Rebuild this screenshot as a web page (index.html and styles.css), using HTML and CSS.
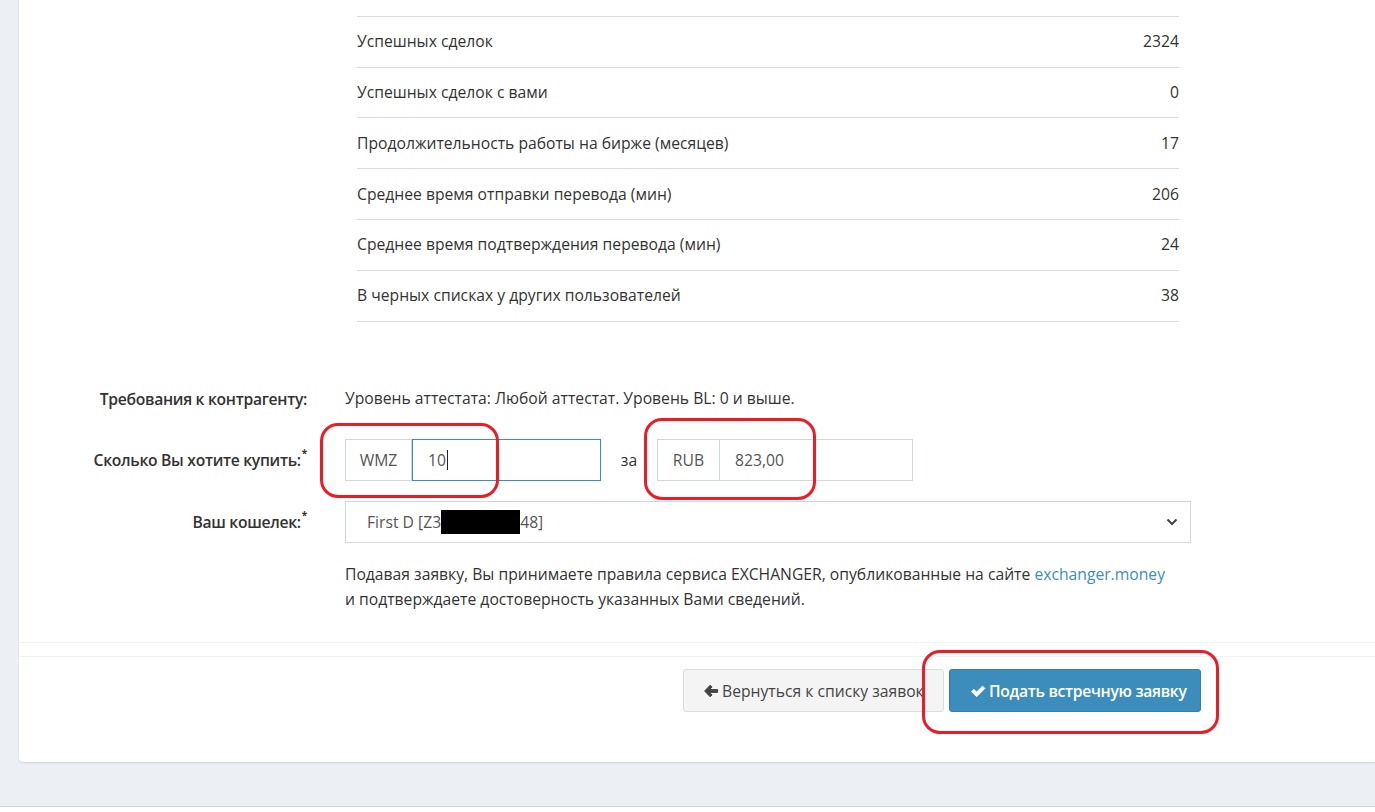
FILE: index.html
```html
<!DOCTYPE html>
<html lang="ru">
<head>
<meta charset="utf-8">
<title>Встречная заявка</title>
<link rel="stylesheet" href="styles.css">
</head>
<body>
<div class="page">
  <div class="card">
    <div class="card-body">
      <div class="stats">
        <div class="stat-row"><span>Дата регистрации на бирже</span><span></span></div>
        <div class="stat-row"><span>Успешных сделок</span><span>2324</span></div>
        <div class="stat-row"><span>Успешных сделок с вами</span><span>0</span></div>
        <div class="stat-row"><span>Продолжительность работы на бирже (месяцев)</span><span>17</span></div>
        <div class="stat-row"><span>Среднее время отправки перевода (мин)</span><span>206</span></div>
        <div class="stat-row"><span>Среднее время подтверждения перевода (мин)</span><span>24</span></div>
        <div class="stat-row"><span>В черных списках у других пользователей</span><span>38</span></div>
      </div>

      <div class="form">
        <div class="form-row">
          <div class="label">Требования к контрагенту:</div>
          <div class="value static">Уровень аттестата: Любой аттестат. Уровень BL: 0 и выше.</div>
        </div>
        <div class="form-row">
          <div class="label">Сколько Вы хотите купить:<sup>*</sup></div>
          <div class="value amounts">
            <div class="input-group">
              <span class="addon addon-wmz">WMZ</span>
              <span class="input focused">10<span class="caret"></span></span>
            </div>
            <span class="za">за</span>
            <div class="input-group">
              <span class="addon addon-rub">RUB</span>
              <span class="input">823,00</span>
            </div>
          </div>
        </div>
        <div class="form-row">
          <div class="label">Ваш кошелек:<sup>*</sup></div>
          <div class="value">
            <div class="select">
              <span class="select-text">First D [Z3<span class="redact"></span>48]</span>
              <svg class="chevron" viewBox="0 0 12 8" width="12" height="8"><polyline points="1.5,1.5 6,6 10.5,1.5" fill="none" stroke="#444" stroke-width="2"/></svg>
            </div>
          </div>
        </div>
        <div class="form-row note-row">
          <div class="label"></div>
          <p class="note">Подавая заявку, Вы принимаете правила сервиса EXCHANGER, опубликованные на сайте <a href="#">exchanger.money</a><br>и подтверждаете достоверность указанных Вами сведений.</p>
        </div>
      </div>
    </div>
    <div class="card-footer">
      <button class="btn btn-default" type="button">
        <svg class="ico" viewBox="0 0 16 16" width="16" height="16"><path d="M7.2 2.2 L1.6 8 L7.2 13.8 L9.1 11.9 L6.4 9.4 H14.6 V6.6 H6.4 L9.1 4.1 Z" fill="#444" stroke="#444" stroke-width="1" stroke-linejoin="round"/></svg>Вернуться к списку заявок
      </button>
      <button class="btn btn-primary" type="button">
        <svg class="ico" viewBox="0 0 16 16" width="16" height="16"><path d="M1.5 8.6 L3.8 6.3 L6.6 9.1 L12.6 3.1 L14.9 5.4 L6.6 13.7 Z" fill="#fff" stroke="#fff" stroke-width="0.8" stroke-linejoin="round"/></svg>Подать встречную заявку
      </button>
    </div>
  </div>
  <div class="main-footer"></div>

  <div class="mark mark-1"></div>
  <div class="mark mark-2"></div>
  <div class="mark mark-3"></div>
</div>
</body>
</html>
```

FILE: styles.css
```css
html, body {
  margin: 0;
  padding: 0;
}
body {
  background: #ecf0f5;
  font-family: "Open Sans", "Noto Sans", sans-serif;
  font-size: 15.7px;
  color: #333;
  overflow: hidden;
}
.page {
  position: relative;
  display: flow-root;
  width: 1375px;
  height: 812px;
}
.card {
  margin-left: 19px;
  margin-top: -34px;
  background: #fff;
  border-bottom-left-radius: 4px;
  box-shadow: 0 1px 2px rgba(0, 0, 0, 0.12);
}
.card-body {
  padding-bottom: 30px;
  border-bottom: 1px solid #f2f2f2;
}
.stats {
  margin-left: 338px;
  width: 822px;
}
.stat-row {
  display: flex;
  justify-content: space-between;
  align-items: center;
  height: 50.8px;
  box-sizing: border-box;
  border-bottom: 1px solid #dcdcdc;
  line-height: 25px;
}
.form {
  margin-top: 56.4px;
}
.form-row {
  display: grid;
  grid-template-columns: 288px 846px;
  column-gap: 38px;
  align-items: center;
  min-height: 42px;
  margin-bottom: 19.5px;
}
.label {
  text-align: right;
  font-weight: 600;
  letter-spacing: -0.3px;
  white-space: nowrap;
}
.label sup {
  font-size: 10px;
  font-weight: 700;
  vertical-align: top;
  position: relative;
  top: -3px;
  margin-left: 1px;
}
.static {
  line-height: 25px;
}
.amounts {
  display: flex;
  align-items: center;
}
.input-group {
  display: flex;
  width: 256px;
  height: 42px;
}
.addon {
  display: flex;
  align-items: center;
  justify-content: center;
  box-sizing: border-box;
  border: 1px solid #d2d6de;
  color: #555;
  background: #fff;
}
.addon-wmz { width: 67px; }
.addon-rub { width: 63px; }
.input {
  flex: 1;
  display: flex;
  align-items: center;
  box-sizing: border-box;
  border: 1px solid #d2d6de;
  border-left: none;
  padding-left: 15px;
  color: #555;
}
.input.focused {
  border: 1px solid #3c8dbc;
}
.caret {
  display: inline-block;
  width: 1px;
  height: 20px;
  background: #222;
  margin-left: 1px;
}
.za {
  width: 56px;
  text-align: center;
  color: #333;
}
.select {
  display: flex;
  align-items: center;
  justify-content: space-between;
  box-sizing: border-box;
  height: 42px;
  border: 1px solid #d2d6de;
  padding: 0 12px 0 21px;
  color: #555;
}
.select-text {
  display: flex;
  align-items: center;
  white-space: pre;
}
.redact {
  display: inline-block;
  width: 79px;
  height: 24px;
  background: #000;
}
.note-row {
  margin-bottom: 0;
}
.note {
  margin: 0;
  line-height: 25px;
  white-space: nowrap;
}
.note a {
  color: #3c8dbc;
  text-decoration: none;
}
.card-footer {
  margin-top: 13px;
  border-top: 1px solid #f2f2f2;
  padding: 12px 174px 50px 0;
  display: flex;
  justify-content: flex-end;
  gap: 5px;
}
.btn {
  display: inline-flex;
  align-items: center;
  gap: 3px;
  height: 43px;
  box-sizing: border-box;
  border-radius: 3px;
  font-family: inherit;
  font-size: 15.7px;
  white-space: nowrap;
  padding: 0 14px 0 19px;
  cursor: pointer;
}
.btn-default {
  background: #f4f4f4;
  border: 1px solid #dddddd;
  color: #444;
  width: 261px;
}
.btn-primary {
  background: #3c8dbc;
  border: 1px solid #367fa9;
  color: #fff;
  font-weight: 600;
  letter-spacing: -0.3px;
  width: 252px;
  padding-left: 20px;
}
.ico {
  flex: none;
}
.main-footer {
  margin-top: 44px;
  height: 20px;
  border-top: 1px solid #d2d6de;
  background: #fff;
}
.mark {
  position: absolute;
  border: 3px solid #ed1c24;
  border-radius: 18px;
  box-sizing: border-box;
}
.mark-1 { left: 320px; top: 423px; width: 179px; height: 75px; }
.mark-2 { left: 644px; top: 418px; width: 172px; height: 82px; }
.mark-3 { left: 922px; top: 650px; width: 297px; height: 84px; }
```
